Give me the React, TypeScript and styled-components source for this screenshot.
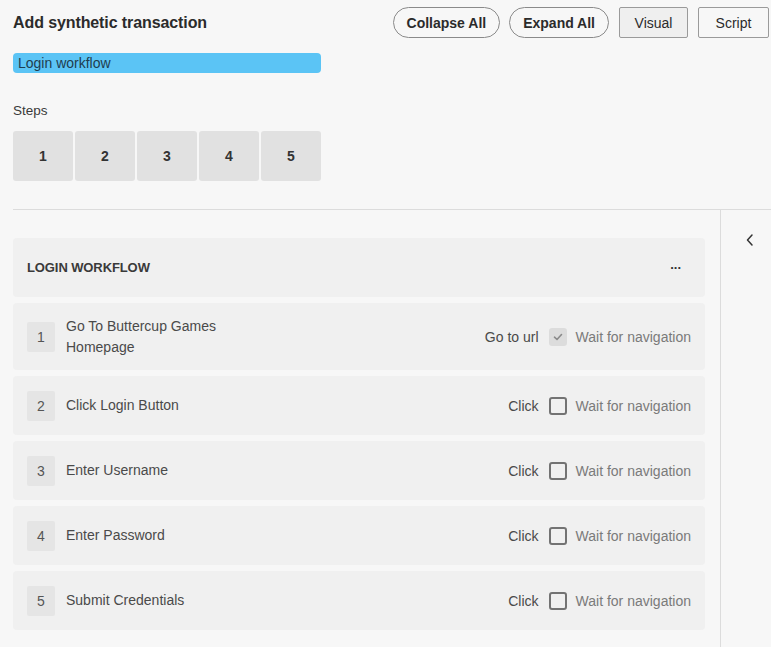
import React from "react";
import styled, { createGlobalStyle } from "styled-components";

const Global = createGlobalStyle`
  html, body { margin: 0; padding: 0; background: #f7f7f7; }
  body { font-family: "Liberation Sans", Arial, sans-serif; color: #333; }
  * { box-sizing: border-box; }
`;

const Page = styled.div`
  width: 771px;
  height: 647px;
  overflow: hidden;
  background: #f7f7f7;
  display: flex;
  flex-direction: column;
`;

const Top = styled.div`
  padding: 7px 2px 0 13px;
  display: flex;
  flex-direction: column;
`;

const HeaderRow = styled.div`
  display: flex;
  align-items: center;
  justify-content: space-between;
  height: 31px;
`;

const Title = styled.h1`
  margin: 0;
  font-size: 16px;
  font-weight: 700;
  color: #2b2b2b;
  letter-spacing: -0.1px;
`;

const Actions = styled.div`
  display: flex;
  align-items: center;
`;

const PillButton = styled.button`
  height: 31px;
  padding: 0 13px;
  border: 1px solid #8a8a8a;
  border-radius: 16px;
  background: transparent;
  font-family: inherit;
  font-size: 14px;
  font-weight: 700;
  color: #2b2b2b;
  margin-left: 9px;
`;

const ToggleButton = styled.button<{ $active?: boolean }>`
  height: 31px;
  width: ${(p) => (p.$active ? "69px" : "71px")};
  border: 1px solid #9a9a9a;
  border-radius: 2px;
  background: ${(p) => (p.$active ? "#efefef" : "transparent")};
  font-family: inherit;
  font-size: 14px;
  color: #2b2b2b;
  margin-left: 10px;
`;

const NameInput = styled.div`
  margin-top: 15px;
  width: 308px;
  height: 20px;
  border-radius: 4px;
  background: #5bc4f5;
  color: #1f3d4f;
  font-size: 14px;
  line-height: 20px;
  padding-left: 5px;
`;

const Label = styled.div`
  margin-top: 29px;
  font-size: 13.5px;
  line-height: 18px;
  color: #3a3a3a;
`;

const StepsRow = styled.div`
  margin-top: 11px;
  display: flex;
  gap: 2px;
`;

const StepBox = styled.div`
  width: 60px;
  height: 50px;
  background: #e1e1e1;
  border-radius: 3px;
  display: flex;
  align-items: center;
  justify-content: center;
  font-size: 14px;
  font-weight: 700;
  color: #333;
`;

const Divider = styled.div`
  margin-top: 28px;
  margin-left: 13px;
  height: 1px;
  background: #dcdcdc;
`;

const Body = styled.div`
  flex: 1;
  display: flex;
`;

const Main = styled.div`
  width: 720px;
  padding: 28px 15px 0 13px;
  display: flex;
  flex-direction: column;
  gap: 6px;
`;

const Side = styled.div`
  flex: 1;
  border-left: 1px solid #dcdcdc;
  display: flex;
  justify-content: center;
  padding-top: 23px;
  padding-left: 8px;
`;

const SectionHeader = styled.div`
  height: 59px;
  background: #f0f0f0;
  border-radius: 4px;
  display: flex;
  align-items: center;
  justify-content: space-between;
  padding: 0 24px 0 14px;
`;

const SectionTitle = styled.div`
  font-size: 13px;
  font-weight: 700;
  color: #3a3a3a;
  letter-spacing: -0.1px;
`;

const More = styled.div`
  font-size: 13px;
  font-weight: 700;
  color: #333;
  margin-top: -6px;
`;

const Row = styled.div<{ $tall?: boolean }>`
  height: ${(p) => (p.$tall ? "67px" : "59px")};
  background: #f0f0f0;
  border-radius: 4px;
  display: flex;
  align-items: center;
  padding: 0 14px;
`;

const Num = styled.div`
  width: 28px;
  height: 30px;
  background: #e5e5e5;
  border-radius: 2px;
  display: flex;
  align-items: center;
  justify-content: center;
  font-size: 14px;
  color: #555;
  flex-shrink: 0;
`;

const StepName = styled.div`
  margin-left: 11px;
  max-width: 170px;
  font-size: 14px;
  line-height: 21px;
  color: #4a4a4a;
`;

const Right = styled.div`
  margin-left: auto;
  display: flex;
  align-items: center;
`;

const Action = styled.span`
  font-size: 14px;
  color: #4a4a4a;
`;

const Check = styled.span<{ $checked?: boolean }>`
  width: 18px;
  height: 18px;
  margin: 0 9px 0 10px;
  border-radius: 3px;
  border: ${(p) => (p.$checked ? "none" : "2px solid #737373")};
  background: ${(p) => (p.$checked ? "#dcdcdc" : "transparent")};
  display: flex;
  align-items: center;
  justify-content: center;
`;

const Wait = styled.span`
  font-size: 14px;
  color: #7a7a7a;
`;

const steps = [
  { n: 1, name: "Go To Buttercup Games Homepage", action: "Go to url", checked: true, tall: true },
  { n: 2, name: "Click Login Button", action: "Click" },
  { n: 3, name: "Enter Username", action: "Click" },
  { n: 4, name: "Enter Password", action: "Click" },
  { n: 5, name: "Submit Credentials", action: "Click" },
];

export default function App() {
  return (
    <Page>
      <Global />
      <Top>
        <HeaderRow>
          <Title>Add synthetic transaction</Title>
          <Actions>
            <PillButton>Collapse All</PillButton>
            <PillButton>Expand All</PillButton>
            <ToggleButton $active>Visual</ToggleButton>
            <ToggleButton>Script</ToggleButton>
          </Actions>
        </HeaderRow>
        <NameInput>Login workflow</NameInput>
        <Label>Steps</Label>
        <StepsRow>
          {[1, 2, 3, 4, 5].map((n) => (
            <StepBox key={n}>{n}</StepBox>
          ))}
        </StepsRow>
      </Top>
      <Divider />
      <Body>
        <Main>
          <SectionHeader>
            <SectionTitle>LOGIN WORKFLOW</SectionTitle>
            <More>...</More>
          </SectionHeader>
          {steps.map((s) => (
            <Row key={s.n} $tall={s.tall}>
              <Num>{s.n}</Num>
              <StepName>{s.name}</StepName>
              <Right>
                <Action>{s.action}</Action>
                <Check $checked={s.checked}>
                  {s.checked && (
                    <svg width="10" height="8" viewBox="0 0 10 8">
                      <path d="M1.5 4.2 L4 6.5 L8.5 1.5" fill="none" stroke="#8a8a8a" strokeWidth="1.6" strokeLinecap="round" strokeLinejoin="round" />
                    </svg>
                  )}
                </Check>
                <Wait>Wait for navigation</Wait>
              </Right>
            </Row>
          ))}
        </Main>
        <Side>
          <svg width="10" height="14" viewBox="0 0 10 14">
            <path d="M7 2 L2.5 7 L7 12" fill="none" stroke="#333" strokeWidth="1.5" strokeLinecap="round" strokeLinejoin="round" />
          </svg>
        </Side>
      </Body>
    </Page>
  );
}
